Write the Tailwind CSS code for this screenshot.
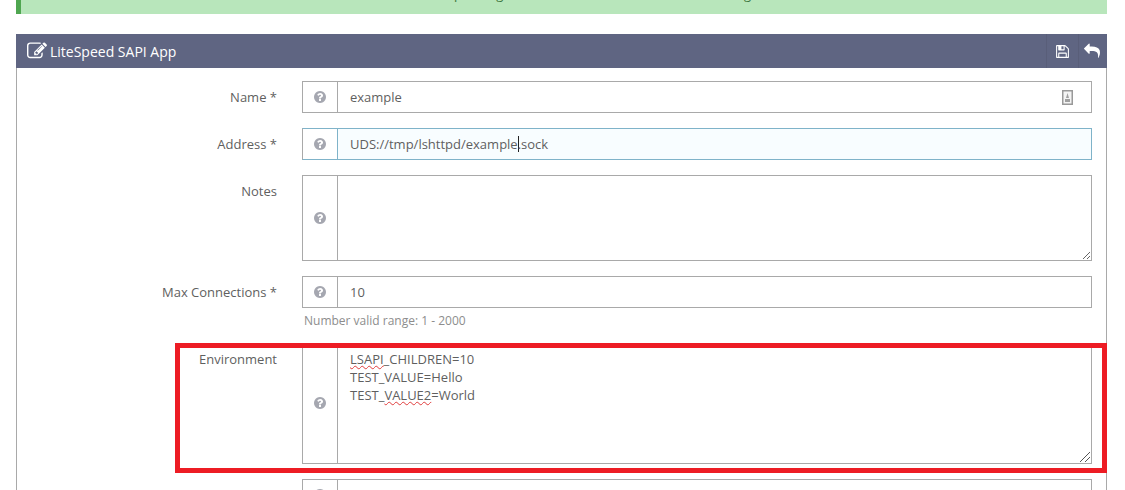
<!DOCTYPE html>
<html lang="en">
  <head>
    <meta charset="UTF-8" />
    <title>LiteSpeed SAPI App</title>
    <script src="https://cdn.jsdelivr.net/npm/@tailwindcss/browser@4"></script>
  </head>
  <body class="bg-white font-['Open_Sans',sans-serif] text-[13px] text-[#5f5f5f]">
    <div class="relative h-[490px] w-[1125px] overflow-hidden px-4">
      <!-- status banner, cut off by the top of the crop -->
      <div class="flex h-[14px] w-[1091px] items-end justify-center overflow-hidden border-l-[5px] border-[#4fa650] bg-[#b8e6bb] pb-[10px] pl-[58px] text-[13px] leading-[20px] text-[#3c763d]">
        <span class="whitespace-nowrap">Restart is pending. Restart the server to make all the changes live.</span>
      </div>

      <div class="mt-5 h-[600px] w-[1091px] border-x border-[#a9a9a9]">
        <div class="-mx-px flex h-[34px] items-center justify-between bg-[#5f6582] pl-[11px] text-white">
          <div class="flex items-center gap-[3px] text-[14px]">
            <svg class="h-[20px] w-[20px]" viewBox="0 0 1792 1792" fill="currentColor"><path d="M888 1184l116-116-152-152-116 116v56h96v96h56zm440-720q-16-16-33 1l-350 350q-17 17-1 33t33-1l350-350q17-17 1-33zm80 594v190q0 119-84.5 203.5t-203.5 84.5h-832q-119 0-203.5-84.5t-84.5-203.5v-832q0-119 84.5-203.5t203.5-84.5h832q63 0 117 25 15 7 18 23 3 17-9 29l-49 49q-14 14-32 8-23-6-45-6h-832q-66 0-113 47t-47 113v832q0 66 47 113t113 47h832q66 0 113-47t47-113v-126q0-13 9-22l64-64q15-15 35-7t20 29zm-96-738l288 288-672 672h-288v-288zm444 132l-92 92-288-288 92-92q28-28 68-28t68 28l152 152q28 28 28 68t-28 68z"/></svg>
            <span>LiteSpeed SAPI App</span>
          </div>
          <div class="flex h-full">
            <div class="flex w-[32px] items-center justify-center border-l border-[#595e79] pr-px">
              <svg class="h-[15px] w-[15px]" viewBox="0 0 1792 1792" fill="currentColor"><path d="M512 1536h768v-384h-768v384zm896 0h128v-896q0-14-10-38.5t-20-34.5l-281-281q-10-10-34-20t-39-10v416q0 40-28 68t-68 28h-576q-40 0-68-28t-28-68v-416h-128v1280h128v-416q0-40 28-68t68-28h832q40 0 68 28t28 68v416zm-384-928v-320q0-13-9.5-22.5t-22.5-9.5h-192q-13 0-22.5 9.5t-9.5 22.5v320q0 13 9.5 22.5t22.5 9.5h192q13 0 22.5-9.5t9.5-22.5zm640 32v928q0 40-28 68t-68 28h-1344q-40 0-68-28t-28-68v-1344q0-40 28-68t68-28h928q40 0 88 20t76 48l280 280q28 28 48 76t20 88z"/></svg>
            </div>
            <div class="flex w-[29px] items-center justify-center border-l border-[#595e79] pr-[3px]">
              <svg class="h-[16px] w-[16px]" viewBox="0 0 1792 1792" fill="currentColor"><path d="M1792 1120q0 166-127 451-3 7-10.5 24t-13.5 30-13 22q-12 17-28 17-15 0-23.5-10t-8.5-25q0-9 2.5-26.5t2.5-23.5q5-68 5-123 0-101-17.5-181t-48.5-138.5-80-101-105.5-69.5-133-42.5-154-21.5-175.5-6h-224v256q0 26-19 45t-45 19-45-19l-512-512q-19-19-19-45t19-45l512-512q19-19 45-19t45 19 19 45v256h224q713 0 875 403 53 134 53 333z"/></svg>
            </div>
          </div>
        </div>

        <form class="flex flex-col gap-[15px] pt-[13px] pr-[14px]">
          <!-- Name -->
          <div class="flex">
            <label class="w-[260px] pt-[6px] text-right leading-[20px]">Name *</label>
            <div class="ml-[25px] flex h-[32px] flex-1 border border-[#a9a9a9]">
              <div class="flex w-[35px] items-center justify-center border-r border-[#a9a9a9] pr-px">
                <svg class="h-[14px] w-[14px] text-[#a5a7b0]" viewBox="0 0 1792 1792" fill="currentColor"><path d="M1024 1376v-192q0-14-9-23t-23-9h-192q-14 0-23 9t-9 23v192q0 14 9 23t23 9h192q14 0 23-9t9-23zm256-672q0-88-55.5-163t-138.5-116-170-41q-243 0-371 213-15 24 8 42l132 100q7 6 19 6 16 0 25-12 53-68 86-92 34-24 86-24 48 0 85.5 26t37.5 59q0 38-20 61t-68 45q-63 28-115.5 86.5t-52.5 125.5v36q0 14 9 23t23 9h192q14 0 23-9t9-23q0-19 21.5-49.5t54.5-49.5q32-18 49-28.5t46-35 44.5-48 28-60.5 12.5-81zm384 192q0 209-103 385.5t-279.5 279.5-385.5 103-385.5-103-279.5-279.5-103-385.5 103-385.5 279.5-279.5 385.5-103 385.5 103 279.5 279.5 103 385.5z"/></svg>
              </div>
              <div class="flex flex-1 items-center justify-between pt-px pr-[18px] pl-[12px]">
                <span>example</span>
                <svg class="h-[15px] w-[11px]" viewBox="0 0 11 15"><rect x="0.75" y="0.75" width="9.5" height="13.5" fill="#f4f4f4" stroke="#999" stroke-width="1.5"/><path d="M5.5 3 7 8H4zM3 9h5v3H3z" fill="#a0a0a0"/></svg>
              </div>
            </div>
          </div>

          <!-- Address -->
          <div class="flex">
            <label class="w-[260px] pt-[6px] text-right leading-[20px]">Address *</label>
            <div class="ml-[25px] flex h-[32px] flex-1 border border-[#a9a9a9] border-y-[#7fb3c9] border-r-[#7fb3c9]">
              <div class="flex w-[35px] items-center justify-center border-r border-[#7fb3c9] pr-px">
                <svg class="h-[14px] w-[14px] text-[#a5a7b0]" viewBox="0 0 1792 1792" fill="currentColor"><path d="M1024 1376v-192q0-14-9-23t-23-9h-192q-14 0-23 9t-9 23v192q0 14 9 23t23 9h192q14 0 23-9t9-23zm256-672q0-88-55.5-163t-138.5-116-170-41q-243 0-371 213-15 24 8 42l132 100q7 6 19 6 16 0 25-12 53-68 86-92 34-24 86-24 48 0 85.5 26t37.5 59q0 38-20 61t-68 45q-63 28-115.5 86.5t-52.5 125.5v36q0 14 9 23t23 9h192q14 0 23-9t9-23q0-19 21.5-49.5t54.5-49.5q32-18 49-28.5t46-35 44.5-48 28-60.5 12.5-81zm384 192q0 209-103 385.5t-279.5 279.5-385.5 103-385.5-103-279.5-279.5-103-385.5 103-385.5 279.5-279.5 385.5-103 385.5 103 279.5 279.5 103 385.5z"/></svg>
              </div>
              <div class="flex flex-1 items-center bg-[#f8fdff] pt-px pl-[12px]">
                <span>UDS://tmp/lshttpd/example<span class="-mr-px inline-block h-[16px] border-l border-[#222] align-[-3px]"></span>.sock</span>
              </div>
            </div>
          </div>

          <!-- Notes -->
          <div class="flex">
            <label class="w-[260px] pt-[6px] text-right leading-[20px]">Notes</label>
            <div class="ml-[25px] flex h-[86px] flex-1 border border-[#a9a9a9]">
              <div class="flex w-[35px] items-center justify-center border-r border-[#a9a9a9] pr-px pb-px">
                <svg class="h-[14px] w-[14px] text-[#a5a7b0]" viewBox="0 0 1792 1792" fill="currentColor"><path d="M1024 1376v-192q0-14-9-23t-23-9h-192q-14 0-23 9t-9 23v192q0 14 9 23t23 9h192q14 0 23-9t9-23zm256-672q0-88-55.5-163t-138.5-116-170-41q-243 0-371 213-15 24 8 42l132 100q7 6 19 6 16 0 25-12 53-68 86-92 34-24 86-24 48 0 85.5 26t37.5 59q0 38-20 61t-68 45q-63 28-115.5 86.5t-52.5 125.5v36q0 14 9 23t23 9h192q14 0 23-9t9-23q0-19 21.5-49.5t54.5-49.5q32-18 49-28.5t46-35 44.5-48 28-60.5 12.5-81zm384 192q0 209-103 385.5t-279.5 279.5-385.5 103-385.5-103-279.5-279.5-103-385.5 103-385.5 279.5-279.5 385.5-103 385.5 103 279.5 279.5 103 385.5z"/></svg>
              </div>
              <textarea class="flex-1 resize-y px-[12px] py-[6px] outline-none"></textarea>
            </div>
          </div>

          <!-- Max Connections -->
          <div class="flex">
            <label class="w-[260px] pt-[6px] text-right leading-[20px]">Max Connections *</label>
            <div class="ml-[25px] flex-1">
              <div class="flex h-[32px] border border-[#a9a9a9]">
                <div class="flex w-[35px] items-center justify-center border-r border-[#a9a9a9] pr-px">
                  <svg class="h-[14px] w-[14px] text-[#a5a7b0]" viewBox="0 0 1792 1792" fill="currentColor"><path d="M1024 1376v-192q0-14-9-23t-23-9h-192q-14 0-23 9t-9 23v192q0 14 9 23t23 9h192q14 0 23-9t9-23zm256-672q0-88-55.5-163t-138.5-116-170-41q-243 0-371 213-15 24 8 42l132 100q7 6 19 6 16 0 25-12 53-68 86-92 34-24 86-24 48 0 85.5 26t37.5 59q0 38-20 61t-68 45q-63 28-115.5 86.5t-52.5 125.5v36q0 14 9 23t23 9h192q14 0 23-9t9-23q0-19 21.5-49.5t54.5-49.5q32-18 49-28.5t46-35 44.5-48 28-60.5 12.5-81zm384 192q0 209-103 385.5t-279.5 279.5-385.5 103-385.5-103-279.5-279.5-103-385.5 103-385.5 279.5-279.5 385.5-103 385.5 103 279.5 279.5 103 385.5z"/></svg>
                </div>
                <div class="flex flex-1 items-center pt-px pl-[12px]">10</div>
              </div>
              <p class="h-[24px] pt-[3px] pl-[2px] text-[12px] leading-[20px] text-[#8d8d8d]">Number valid range: 1 - 2000</p>
            </div>
          </div>

          <!-- Environment -->
          <div class="flex">
            <label class="w-[260px] pt-[2px] text-right leading-[20px]">Environment</label>
            <div class="ml-[25px] flex h-[117px] flex-1 border border-[#a9a9a9]">
              <div class="flex w-[35px] items-center justify-center border-r border-[#a9a9a9] pr-px pb-[5px]">
                <svg class="h-[14px] w-[14px] text-[#a5a7b0]" viewBox="0 0 1792 1792" fill="currentColor"><path d="M1024 1376v-192q0-14-9-23t-23-9h-192q-14 0-23 9t-9 23v192q0 14 9 23t23 9h192q14 0 23-9t9-23zm256-672q0-88-55.5-163t-138.5-116-170-41q-243 0-371 213-15 24 8 42l132 100q7 6 19 6 16 0 25-12 53-68 86-92 34-24 86-24 48 0 85.5 26t37.5 59q0 38-20 61t-68 45q-63 28-115.5 86.5t-52.5 125.5v36q0 14 9 23t23 9h192q14 0 23-9t9-23q0-19 21.5-49.5t54.5-49.5q32-18 49-28.5t46-35 44.5-48 28-60.5 12.5-81zm384 192q0 209-103 385.5t-279.5 279.5-385.5 103-385.5-103-279.5-279.5-103-385.5 103-385.5 279.5-279.5 385.5-103 385.5 103 279.5 279.5 103 385.5z"/></svg>
              </div>
              <div class="relative flex-1 px-[12px] py-[2px] leading-[18px]">
                <div><span class="underline decoration-[#e03c3c] decoration-wavy decoration-1">LSAPI</span>_CHILDREN=10</div>
                <div>TEST_VALUE=Hello</div>
                <div>TEST_<span class="underline decoration-[#e03c3c] decoration-wavy decoration-1">VALUE2</span>=World</div>
                <svg class="absolute right-0 bottom-0 h-[15px] w-[15px]" viewBox="0 0 15 15" stroke="#555" fill="none"><path d="M14 4 4 14M14 9 9 14"/></svg>
              </div>
            </div>
          </div>

          <!-- next row, cut off by the bottom of the crop -->
          <div class="flex">
            <div class="ml-[285px] flex h-[32px] flex-1 border border-[#a9a9a9]">
              <div class="flex w-[35px] items-center justify-center border-r border-[#a9a9a9] pr-px">
                <svg class="h-[14px] w-[14px] text-[#a5a7b0]" viewBox="0 0 1792 1792" fill="currentColor"><path d="M1024 1376v-192q0-14-9-23t-23-9h-192q-14 0-23 9t-9 23v192q0 14 9 23t23 9h192q14 0 23-9t9-23zm256-672q0-88-55.5-163t-138.5-116-170-41q-243 0-371 213-15 24 8 42l132 100q7 6 19 6 16 0 25-12 53-68 86-92 34-24 86-24 48 0 85.5 26t37.5 59q0 38-20 61t-68 45q-63 28-115.5 86.5t-52.5 125.5v36q0 14 9 23t23 9h192q14 0 23-9t9-23q0-19 21.5-49.5t54.5-49.5q32-18 49-28.5t46-35 44.5-48 28-60.5 12.5-81zm384 192q0 209-103 385.5t-279.5 279.5-385.5 103-385.5-103-279.5-279.5-103-385.5 103-385.5 279.5-279.5 385.5-103 385.5 103 279.5 279.5 103 385.5z"/></svg>
              </div>
            </div>
          </div>
        </form>
      </div>

      <!-- red annotation drawn over the screenshot -->
      <div class="absolute top-[343px] left-[175px] h-[130px] w-[932px] border-[5px] border-[#ed1c24]"></div>
    </div>
  </body>
</html>
